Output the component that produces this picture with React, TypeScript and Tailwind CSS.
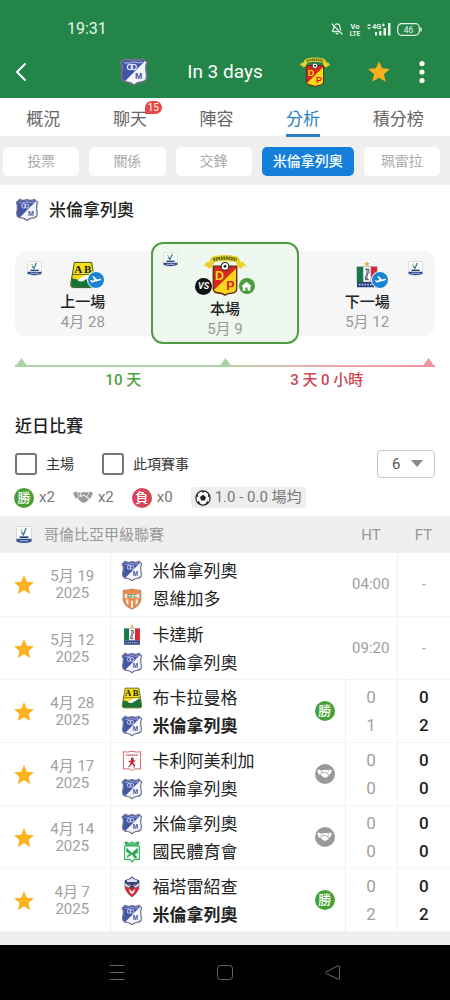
import { useState } from "react";
import type { ReactNode } from "react";
import { BellOff } from "lucide-react";
import { MdHome, MdStar } from "react-icons/md";

// ── Types ──────────────────────────────────────────────────────────────────
type Team = "mil" | "per" | "buc" | "cal" | "env" | "ame" | "nac" | "for";
type Result = "win" | "draw";

interface Match {
  day: string;
  home: Team;
  away: Team;
  time?: string;
  result?: Result;
  ht?: [number, number];
  ft?: [number, number];
}

// ── Data ───────────────────────────────────────────────────────────────────
const NAMES: Record<Team, string> = {
  mil: "米倫拿列奧",
  per: "珮雷拉",
  buc: "布卡拉曼格",
  cal: "卡達斯",
  env: "恩維加多",
  ame: "卡利阿美利加",
  nac: "國民體育會",
  for: "福塔雷紹查",
};

const MATCHES: Match[] = [
  { day: "5月 19", home: "mil", away: "env", time: "04:00" },
  { day: "5月 12", home: "cal", away: "mil", time: "09:20" },
  { day: "4月 28", home: "buc", away: "mil", result: "win", ht: [0, 1], ft: [0, 2] },
  { day: "4月 17", home: "ame", away: "mil", result: "draw", ht: [0, 0], ft: [0, 0] },
  { day: "4月 14", home: "mil", away: "nac", result: "draw", ht: [0, 0], ft: [0, 0] },
  { day: "4月 7", home: "for", away: "mil", result: "win", ht: [0, 2], ft: [0, 2] },
];

const TABS = ["概況", "聊天", "陣容", "分析", "積分榜"];
const SUB_TABS = ["投票", "關係", "交鋒", "米倫拿列奧", "珮雷拉"];

// ── Crests ─────────────────────────────────────────────────────────────────
const SHIELD = "M4.6 1.4Q8 3.4 12 1.6Q16 3.4 19.4 1.4L22.6 4.4Q21 7 21.6 11Q22.8 15 21.8 18Q20 20.2 16.6 20.2Q14 20.6 12 22.6Q10 20.6 7.4 20.2Q4 20.2 2.2 18Q1.2 15 2.4 11Q3 7 1.4 4.4Z";

const CRESTS: Record<Team, ReactNode> = {
  mil: (
    <>
      <path d={SHIELD} fill="#f4f5fb" />
      <path d="M4.6 1.8Q8 3.8 12 2Q16 3.8 19.4 1.8L20.6 3.4L4.8 19.4Q1.4 18 1.8 14L2.6 11Q3.4 7 1.8 4.4Z" fill="#4356a6" />
      <path d={SHIELD} fill="none" stroke="#6d7191" strokeWidth="1.3" strokeLinejoin="round" />
      <path d="M4 4.6Q8 5.6 12 3.8Q16 5.6 19 4" fill="none" stroke="#cdd3ef" strokeWidth=".7" />
      <circle cx="8.8" cy="8" r="2.1" fill="none" stroke="#dfe4fa" strokeWidth=".9" />
      <circle cx="11.8" cy="8" r="2.1" fill="none" stroke="#dfe4fa" strokeWidth=".9" />
      <text x="15.8" y="17.6" textAnchor="middle" fontSize="7" fontWeight="700" fontFamily="Liberation Sans, sans-serif" fill="#4a579c">M</text>
    </>
  ),
  per: (
    <>
      <path d="M5.6 7.2H18.4V19.4Q18.4 21.4 16.4 21.8Q13 22.2 12 23Q11 22.2 7.6 21.8Q5.6 21.4 5.6 19.4Z" fill="#d9261c" stroke="#5b2a12" strokeWidth=".7" />
      <path d="M18 8.4V19.4Q18 21 16.2 21.4Q13 21.8 12 22.5Q10.8 21.6 7.6 21.2Q6.2 20.8 6 20.2Z" fill="#f8d61c" />
      <path d="M.4 7.4L2 4.8L3.4 5Q3.8 2.4 6 1.8Q12 .4 18 1.8Q20.2 2.4 20.6 5L22 4.8L23.6 7.4L21.6 7.2L21 8.6L18.8 7.6L17.8 5Q12 3.8 6.2 5L5.2 7.6L3 8.6L2.4 7.2Z" fill="#e9d32a" />
      <path d="M5.6 3.7Q12 1.8 18.4 3.7" fill="none" stroke="#5e6a16" strokeWidth="1.8" strokeDasharray="1 .4" />
      <circle cx="12" cy="7.3" r="2.1" fill="#fff" stroke="#222" strokeWidth=".6" />
      <circle cx="12" cy="7.3" r=".8" fill="#222" />
      <text x="9" y="14.8" textAnchor="middle" fontSize="6.8" fontWeight="700" fontFamily="Liberation Sans, sans-serif" fill="#f8d61c">D</text>
      <text x="15" y="20" textAnchor="middle" fontSize="6.8" fontWeight="700" fontFamily="Liberation Sans, sans-serif" fill="#d9261c">P</text>
    </>
  ),
  buc: (
    <>
      <path d="M4.6 1.2H19.4L22.6 20Q23 22.8 20 22.8H4Q1 22.8 1.4 20Z" fill="#f4df16" stroke="#3c4a18" strokeWidth=".8" />
      <path d="M2.4 14.5Q8 16.5 11 15.4Q16 12.6 21.2 13.2L22.2 20Q22.6 22.4 20 22.4H4Q1.4 22.4 1.8 20Z" fill="#16733a" />
      <path d="M7 16.2L15.4 11.6Q19 11 19.4 12.8L12 17.4Q9 18 7 16.2Z" fill="#fff" />
      <path d="M3.2 11.6H20.8" stroke="#3c4a18" strokeWidth=".7" />
      <text x="7.9" y="10.2" textAnchor="middle" fontSize="9.5" fontWeight="700" fontFamily="Liberation Serif, serif" fill="#1b1b12">A</text>
      <text x="16.1" y="10.2" textAnchor="middle" fontSize="9.5" fontWeight="700" fontFamily="Liberation Serif, serif" fill="#1b1b12">B</text>
    </>
  ),
  cal: (
    <>
      <path d="M12 .2L12.7 1.8L14.4 1.9L13.1 3L13.5 4.6L12 3.7L10.5 4.6L10.9 3L9.6 1.9L11.3 1.8Z" fill="#dcae3b" />
      <rect x="3.4" y="5" width="17.2" height="13" fill="#fff" stroke="#8b8f96" strokeWidth=".5" />
      <rect x="3.4" y="5" width="5.4" height="13" fill="#17784a" />
      <rect x="15.2" y="5" width="5.4" height="13" fill="#d52b38" />
      <path d="M10.4 7H13.6V10L10.6 13.4V16H13.6M12 7V16" stroke="#2c3557" strokeWidth=".8" fill="none" />
      <rect x="3.4" y="18" width="17.2" height="4.6" rx=".6" fill="#28407f" />
      <path d="M5 20.3H19" stroke="#b9c5e8" strokeWidth="1.6" strokeDasharray="1.4 1" />
    </>
  ),
  env: (
    <>
      <path d="M2.4 2.4Q7 2.6 12 1Q17 2.6 21.6 2.4V13Q20.6 20 12 23Q3.4 20 2.4 13Z" fill="#ee8748" stroke="#a97d62" strokeWidth=".8" />
      <path d="M4 6.4H20V11H4Z" fill="#f9eddd" />
      <path d="M5.6 12.4H8V18.6L5.6 16ZM10.8 14H13.2V21.2L12 21.8L10.8 21.2ZM16 12.4H18.4V16L16 18.6Z" fill="#fbf3ea" />
      <text x="12" y="10.8" textAnchor="middle" fontSize="5.6" fontWeight="700" fontFamily="Liberation Sans, sans-serif" fill="#3f8a4d">EFC</text>
    </>
  ),
  ame: (
    <>
      <path d="M2.6 1.8Q7 3 12 1.4Q17 3 21.4 1.8V20.6H15Q13 21 12 22.6Q11 21 9 20.6H2.6Z" fill="#fff" stroke="#c9494f" strokeWidth=".9" />
      <path d="M5.4 5.6H18.6" stroke="#c4353c" strokeWidth="1.5" strokeDasharray="1.6 .5" />
      <path d="M11 8.6L12.6 8L14 9.4L13.4 11L16 11.6L15.6 12.6L13.6 12.6L13.8 14.6L15.6 16.4L14.8 19H13.6L14 17L11.8 15.4L10.4 17.2L8.6 19L8 18.2L9.6 16L10.6 13.4L8.2 13L8.4 12L11 11.4Z" fill="#c2222b" />
    </>
  ),
  nac: (
    <>
      <path d="M3.6 .8H8V2H10.4V.8H13.6V2H16V.8H20.4L19 5.4H5Z" fill="#35ad5b" />
      <path d="M4 5.4H20V20H14.6L12 22.8L9.4 20H4Z" fill="#f4fbf5" stroke="#35ad5b" strokeWidth="1.2" />
      <path d="M5.8 7.2L12 13L18.2 7.2V13L15 14.4L18 18.6H14.6L12 14.8L9.4 16.4L6.6 18.6V16L9.6 13.8L5.8 12Z" fill="#2aa453" />
      <path d="M6.5 3.4H17.5" stroke="#d6f2de" strokeWidth=".9" strokeDasharray="1 .6" />
    </>
  ),
  for: (
    <>
      <path d="M4 4.6Q9 3.6 12 .6Q15 3.6 20 4.6Q21.6 17 12 23.2Q2.4 17 4 4.6Z" fill="#3d4670" />
      <path d="M6 4.8Q10 4 12 2Q14 4 18 4.8L17 6.6H7Z" fill="#dfe2ec" />
      <path d="M4 12.6L8 11.4L12 14.4L16 11.4L20 12.6Q18 19 12 22.6Q6 19 4 12.6Z" fill="#d5303f" />
      <path d="M4.6 8.2L10.8 10L8.6 12.6L4.6 10.8ZM19.4 8.2L13.2 10L15.4 12.6L19.4 10.8ZM8.4 14L12 17L15.6 14L14 18.4L12 20L10 18.4Z" fill="#f3f3f7" />
      <path d="M6.4 9.4L9.4 10.6M17.6 9.4L14.6 10.6" stroke="#20263f" strokeWidth="1" />
    </>
  ),
};

function Crest({ team, className }: { team: Team; className: string }) {
  return (
    <svg viewBox="0 0 24 24" className={`shrink-0 ${className}`} aria-hidden="true">
      {CRESTS[team]}
    </svg>
  );
}

function LeagueLogo({ className }: { className: string }) {
  return (
    <svg viewBox="0 0 16 18" className={className} preserveAspectRatio="none" aria-hidden="true">
      <rect x=".5" y=".5" width="15" height="16" rx="1" fill="#fcfdfe" stroke="#c9d2d6" strokeWidth=".8" />
      <path d="M10 2.2L7.4 9L5.4 5.6" fill="none" stroke="#2c7590" strokeWidth="1.3" />
      <circle cx="5.2" cy="4" r="1" fill="#b6cf4a" />
      <path d="M3.6 11.2H12.4" stroke="#2b406c" strokeWidth="1.6" />
      <path d="M.6 12.8H15.4V15.4Q8 18.6 .6 15.4Z" fill="#2d4a86" />
      <path d="M3.6 14.8H12.4" stroke="#c9d5ee" strokeWidth=".9" />
    </svg>
  );
}

// ── Small marks ────────────────────────────────────────────────────────────
function Handshake({ className }: { className: string }) {
  return (
    <svg viewBox="0 0 24 15" className={className} fill="currentColor" aria-hidden="true">
      <path d="M0 2.6L3.8 .4L7 7.2L3.4 9.2Z" />
      <path d="M24 2.6L20.2 .4L17 7.2L20.6 9.2Z" />
      <path d="M5.2 1.4L9.4 2L8 5.4Q8.2 7.6 10.6 6.8L13 5.4L18.8 10Q19 11.6 17.4 11.4Q17.4 12.8 15.8 12.6Q15.4 14 14 13.6Q13 15 11.6 14L6.6 10.2L5.6 8.6L7.8 7.4Z" />
      <path d="M10.4 1.4H14.2L18.8 1.6L16.6 7L13.2 4.2L10.2 5.8Q9.2 5.8 9.2 5Z" />
    </svg>
  );
}

function Ball() {
  return (
    <svg viewBox="0 0 18 18" className="size-4" aria-hidden="true">
      <circle cx="9" cy="9" r="8" fill="#fff" stroke="#222" strokeWidth="1.3" />
      <path d="M9 5.4L12.4 7.9L11.1 11.9H6.9L5.6 7.9Z" fill="#222" />
      <path d="M6.4 1.4H11.6L9 3.2ZM1 8.6L2.4 4.6L3.8 7ZM17 8.6L15.6 4.6L14.2 7ZM3.2 14.6L4 11.8L6.8 16.6ZM14.8 14.6L14 11.8L11.2 16.6Z" fill="#222" />
    </svg>
  );
}

function PlaneMark() {
  return (
    <span className="absolute top-[10px] -right-2 flex size-[18px] items-center justify-center rounded-full border border-white bg-[#1b83d2]">
      <svg viewBox="0 0 24 20" className="w-[13px]" fill="white" aria-hidden="true">
        <path d="M22.07 9.64c-.21-.8-1.04-1.28-1.84-1.06L14.92 10l-6.9-6.43-1.93.51 4.14 7.17-4.97 1.33-1.97-1.54-1.45.39 2.59 4.49s7.12-1.9 16.57-4.43c.81-.23 1.28-1.05 1.07-1.85z" />
      </svg>
    </span>
  );
}

function ResultMark({ result }: { result: Result | "loss" }) {
  if (result === "draw") {
    return (
      <span className="inline-flex size-5 items-center justify-center rounded-full bg-[#999999] text-white">
        <Handshake className="w-[15px]" />
      </span>
    );
  }
  const color = result === "win" ? "bg-[#46a035]" : "bg-[#d5455a]";
  return (
    <span className={`inline-flex size-5 items-center justify-center rounded-full text-[13px] leading-5 font-medium text-white ${color}`}>
      {result === "win" ? "勝" : "負"}
    </span>
  );
}

function Triangle({ className }: { className: string }) {
  return (
    <svg viewBox="0 0 13 9" className={`absolute bottom-0 w-[13px] ${className}`} fill="currentColor" aria-hidden="true">
      <path d="M6.5 0L13 9H0Z" />
    </svg>
  );
}

// ── Header ─────────────────────────────────────────────────────────────────
function StatusBar() {
  return (
    <div className="flex h-[46px] items-center justify-between pt-3 pr-7 pl-[67px] text-[#e6f5e9]">
      <span className="text-base leading-5">19:31</span>
      <div className="flex items-center gap-1.5">
        <BellOff size={12} strokeWidth={2.5} />
        <svg viewBox="0 0 12 15" className="w-3" fill="currentColor" fontFamily="Roboto, sans-serif" fontWeight="700" aria-hidden="true">
          <text x="6" y="7" textAnchor="middle" fontSize="7.5">Vo</text>
          <text x="6" y="13.5" textAnchor="middle" fontSize="6.5">LTE</text>
        </svg>
        <svg viewBox="0 0 24 14" className="w-6" fill="currentColor" aria-hidden="true">
          <path d="M0 4L2 1.6L4 4ZM0 5.4H4L2 7.6Z" />
          <text x="5" y="7" fontSize="7.5" fontWeight="700" fontFamily="Roboto, sans-serif">4G</text>
          <path d="M15 3H18M16.5 1.5V4.5" stroke="currentColor" />
          <rect x="8" y="10" width="2" height="3.5" />
          <rect x="12" y="9" width="2.5" height="4.5" />
          <rect x="16.5" y="6" width="2.5" height="7.5" />
          <rect x="21" y="1" width="2.5" height="12.5" />
        </svg>
        <svg viewBox="0 0 25 13" className="w-[25px]" aria-hidden="true">
          <rect x=".7" y=".7" width="21.6" height="11.6" rx="4" fill="none" stroke="currentColor" strokeWidth="1.2" />
          <path d="M24 4.5V8.5" stroke="currentColor" strokeWidth="1.4" />
          <text x="11.5" y="9.5" textAnchor="middle" fontSize="8.5" fontFamily="Roboto, sans-serif" fill="currentColor">46</text>
        </svg>
      </div>
    </div>
  );
}

function Header() {
  return (
    <header className="bg-[#248549]">
      <StatusBar />
      <div className="grid h-[52px] grid-cols-[1fr_auto_1fr] items-center text-white">
        <div className="flex items-center justify-between pr-[38px] pl-3">
          <button type="button" aria-label="返回">
            <svg viewBox="0 0 18 24" className="h-6" fill="none" stroke="currentColor" strokeWidth="2" aria-hidden="true">
              <path d="M13.5 3.5L5 12L13.5 20.5" />
            </svg>
          </button>
          <Crest team="mil" className="size-[30px]" />
        </div>
        <h1 className="text-[19px] leading-6 font-normal">In 3 days</h1>
        <div className="flex items-center justify-between pr-4 pl-9">
          <Crest team="per" className="size-8" />
          <div className="flex items-center gap-[18px]">
            <button type="button" aria-label="收藏" className="text-[#fbaf1c]">
              <MdStar size={26} />
            </button>
            <button type="button" aria-label="更多">
              <svg viewBox="0 0 24 24" className="size-6" fill="currentColor" aria-hidden="true">
                <circle cx="12" cy="3.5" r="2.6" />
                <circle cx="12" cy="12" r="2.6" />
                <circle cx="12" cy="20.5" r="2.6" />
              </svg>
            </button>
          </div>
        </div>
      </div>
    </header>
  );
}

// ── Previous / current / next fixture ──────────────────────────────────────
function FixtureCards() {
  return (
    <div className="mt-[7px] flex items-center px-[15px] text-center text-[15px] leading-5">
      <div className="relative flex flex-[137] flex-col items-center rounded-l-xl bg-[#f6f6f6] pt-2.5 pb-1">
        <LeagueLogo className="absolute top-2.5 left-3 size-[15px]" />
        <div className="relative">
          <Crest team="buc" className="size-7" />
          <PlaneMark />
        </div>
        <div className="mt-[3px] font-medium text-[#222222]">上一場</div>
        <div className="text-[#999999]">4月 28</div>
      </div>
      <div className="relative flex flex-[146] flex-col items-center rounded-xl border-2 border-[#4f9d41] bg-[#eff8ee] pt-[9px] pb-[3px]">
        <LeagueLogo className="absolute top-2 left-2.5 size-[15px]" />
        <div className="relative">
          <Crest team="per" className="size-11" />
          <span className="absolute top-[25px] -left-2 flex size-[17px] items-center justify-center rounded-full bg-[#111111] text-[9px] leading-none font-bold text-white italic">
            VS
          </span>
          <span className="absolute top-[25px] -right-2 flex size-4 items-center justify-center rounded-full bg-[#4a9b3d] text-white">
            <MdHome size={13} />
          </span>
        </div>
        <div className="mt-0.5 font-medium text-[#222222]">本場</div>
        <div className="text-[#999999]">5月 9</div>
      </div>
      <div className="relative flex flex-[137] flex-col items-center rounded-r-xl bg-[#f6f6f6] pt-2.5 pb-1">
        <LeagueLogo className="absolute top-2.5 right-3 size-[15px]" />
        <div className="relative">
          <Crest team="cal" className="size-7" />
          <PlaneMark />
        </div>
        <div className="mt-[3px] font-medium text-[#222222]">下一場</div>
        <div className="text-[#999999]">5月 12</div>
      </div>
    </div>
  );
}

function Timeline() {
  return (
    <div className="mt-[14px] px-[15px]">
      <div className="relative flex h-[9px] items-end">
        <div className="h-[2px] flex-1 bg-[#a9d3a2]" />
        <div className="h-[2px] flex-1 bg-linear-to-r from-[#b3d3a6] via-[#e5b0aa] via-40% to-[#f0959d]" />
        <Triangle className="left-0 text-[#a9d3a2]" />
        <Triangle className="inset-x-0 mx-auto text-[#a9d3a2]" />
        <Triangle className="right-0 text-[#f0959d]" />
      </div>
      <div className="mt-[3px] grid grid-cols-2 gap-[13px] px-[13px] text-center text-[15px] leading-5 font-medium">
        <span className="text-[#52a044]">10 天</span>
        <span className="text-[#d04550]">3 天 0 小時</span>
      </div>
    </div>
  );
}

// ── Filters and totals ─────────────────────────────────────────────────────
function Check({ label }: { label: string }) {
  return (
    <label className="flex items-center gap-[9px] text-sm leading-5 text-[#333333]">
      <input
        type="checkbox"
        className="size-[22px] appearance-none rounded-[3px] border-2 border-[#777777] bg-white checked:bg-[#1784dd]"
      />
      {label}
    </label>
  );
}

function Filters() {
  const [count, setCount] = useState("6");
  return (
    <div className="mt-3 flex items-center gap-7 px-[15px]">
      <Check label="主場" />
      <Check label="此項賽事" />
      <div className="relative ml-auto">
        <select
          aria-label="場數"
          value={count}
          onChange={(e) => setCount(e.target.value)}
          className="h-7 w-[58px] appearance-none rounded-sm border border-[#c8c8c8] bg-white pl-[14px] text-[15px] leading-5 text-[#555555]"
        >
          <option>6</option>
          <option>10</option>
          <option>20</option>
        </select>
        <svg viewBox="0 0 12 7" className="pointer-events-none absolute top-[10px] right-3 w-3" fill="#888888" aria-hidden="true">
          <path d="M0 0H12L6 7Z" />
        </svg>
      </div>
    </div>
  );
}

function Totals() {
  return (
    <div className="mt-[9px] flex items-center px-[14px] text-[15px] leading-[21px] text-[#777777]">
      <span className="flex items-center gap-[5px]">
        <ResultMark result="win" /> x2
      </span>
      <span className="ml-[18px] flex items-center gap-[5px]">
        <Handshake className="w-5 text-[#999999]" /> x2
      </span>
      <span className="ml-[18px] flex items-center gap-[5px]">
        <ResultMark result="loss" /> x0
      </span>
      <span className="ml-[18px] flex items-center gap-1 rounded-sm bg-[#eeeeee] px-1">
        <Ball /> 1.0 - 0.0 場均
      </span>
    </div>
  );
}

// ── Match table ────────────────────────────────────────────────────────────
function TeamLine({ team, bold }: { team: Team; bold: boolean }) {
  return (
    <div className={`flex items-center gap-2.5 ${bold ? "font-bold" : ""}`}>
      <Crest team={team} className="size-[22px]" />
      {NAMES[team]}
    </div>
  );
}

function MatchTable() {
  return (
    <table className="mt-2 w-full table-fixed border-collapse">
      <colgroup>
        <col className="w-[48px]" />
        <col className="w-[62px]" />
        <col />
        <col className="w-[40px]" />
        <col className="w-[52px]" />
        <col className="w-[53px]" />
      </colgroup>
      <thead className="bg-[#efefef] text-[15px] leading-5 text-[#999999]">
        <tr className="h-[37px]">
          <th colSpan={4} className="p-0 text-left font-normal">
            <div className="flex items-center gap-3 pl-4">
              <LeagueLogo className="h-[18px] w-4" />
              哥倫比亞甲級聯賽
            </div>
          </th>
          <th className="p-0 font-normal">HT</th>
          <th className="p-0 font-normal">FT</th>
        </tr>
      </thead>
      <tbody>
        {MATCHES.map((m) => (
          <tr key={m.day} className="h-[63px] border-b border-[#f4f4f4]">
            <td className="p-0 pt-0.5">
              <button type="button" aria-label="收藏" className="flex w-full justify-center text-[#fcb11f]">
                <MdStar size={24} />
              </button>
            </td>
            <td className="border-r border-[#f0f0f0] p-0 pt-0.5 pr-[13px] text-center text-[15px] leading-[17px] whitespace-nowrap text-[#a0a0a0]">
              {m.day}
              <br />
              2025
            </td>
            <td className="p-0 pt-0.5 pl-2.5 text-[17px] leading-7 whitespace-nowrap text-[#222222]">
              <TeamLine team={m.home} bold={false} />
              <TeamLine team={m.away} bold={m.result === "win"} />
            </td>
            <td className={m.ft ? "border-r border-[#f0f0f0] p-0" : "p-0"}>
              {m.result && (
                <span className="flex justify-center">
                  <ResultMark result={m.result} />
                </span>
              )}
            </td>
            <td className="border-r border-[#f2f2f2] p-0 text-center text-[#a0a0a0]">
              {m.ht ? (
                <div className="text-[17px] leading-7">
                  <div>{m.ht[0]}</div>
                  <div>{m.ht[1]}</div>
                </div>
              ) : (
                <span className="text-[15px] leading-5">{m.time}</span>
              )}
            </td>
            <td className="p-0 text-center">
              {m.ft ? (
                <div className="text-[17px] leading-7 font-medium text-[#222222]">
                  <div>{m.ft[0]}</div>
                  <div>{m.ft[1]}</div>
                </div>
              ) : (
                <span className="text-[15px] leading-5 text-[#aaaaaa]">-</span>
              )}
            </td>
          </tr>
        ))}
      </tbody>
    </table>
  );
}

// ── Page ───────────────────────────────────────────────────────────────────
export default function App() {
  const [tab, setTab] = useState("分析");
  const [sub, setSub] = useState("米倫拿列奧");

  return (
    <div className="flex min-h-screen flex-col bg-[#efefef] font-[Roboto,'Noto_Sans_CJK_TC',sans-serif]">
      <Header />

      <nav className="flex h-[38px] bg-white text-[17px] leading-6 text-[#666666]">
        {TABS.map((t) => (
          <button key={t} type="button" onClick={() => setTab(t)} className="flex flex-auto justify-center">
            <span
              className={`relative flex h-[39px] items-center border-b-[3px] pt-1.5 ${
                t === tab ? "border-[#2c7fc4] text-[#2c7fc4]" : "border-transparent"
              }`}
            >
              {t}
              {t === "聊天" && (
                <span className="absolute top-[3px] -right-[15px] rounded-full rounded-bl-none bg-[#e84545] px-[3px] text-[10px] leading-[13px] text-white">
                  15
                </span>
              )}
            </span>
          </button>
        ))}
      </nav>

      <nav className="flex h-[49px] items-center gap-2.5 pt-px pr-2.5 pl-[3px] text-sm">
        {SUB_TABS.map((t) => (
          <button
            key={t}
            type="button"
            onClick={() => setSub(t)}
            className={`h-[29px] rounded-[5px] leading-5 ${
              t === sub ? "bg-[#1480dc] px-[11px] font-medium text-white" : "flex-1 bg-white text-[#aaaaaa]"
            }`}
          >
            {t}
          </button>
        ))}
      </nav>

      <main className="bg-white">
        <h2 className="flex h-[50px] items-center gap-2.5 px-[15px] text-[17px] leading-6 font-medium text-[#222222]">
          <Crest team="mil" className="size-6" />
          米倫拿列奧
        </h2>
        <FixtureCards />
        <Timeline />
        <h2 className="mt-6 px-[15px] text-[17px] leading-6 font-medium text-[#222222]">近日比賽</h2>
        <Filters />
        <Totals />
        <MatchTable />
      </main>

      {/* System navigation */}
      <footer className="mt-auto flex h-[55px] items-center justify-center gap-[84px] bg-black text-[#666666]">
        <button type="button" aria-label="最近">
          <svg viewBox="0 0 24 24" className="size-6" fill="none" stroke="currentColor" aria-hidden="true">
            <path d="M4.5 4.5H19.5M4.5 11.5H19.5M4.5 18.5H19.5" />
          </svg>
        </button>
        <button type="button" aria-label="主頁">
          <svg viewBox="0 0 24 24" className="size-6" fill="none" stroke="currentColor" aria-hidden="true">
            <rect x="4.5" y="4.5" width="15" height="14" rx="3" />
          </svg>
        </button>
        <button type="button" aria-label="上一頁">
          <svg viewBox="0 0 24 24" className="size-6" fill="none" stroke="currentColor" strokeLinejoin="round" aria-hidden="true">
            <path d="M5 10.8L17 4.8Q18.5 4.5 18.5 6V17Q18.5 18.5 17 18.2L5 12.4Q4 11.6 5 10.8Z" />
          </svg>
        </button>
      </footer>
    </div>
  );
}
